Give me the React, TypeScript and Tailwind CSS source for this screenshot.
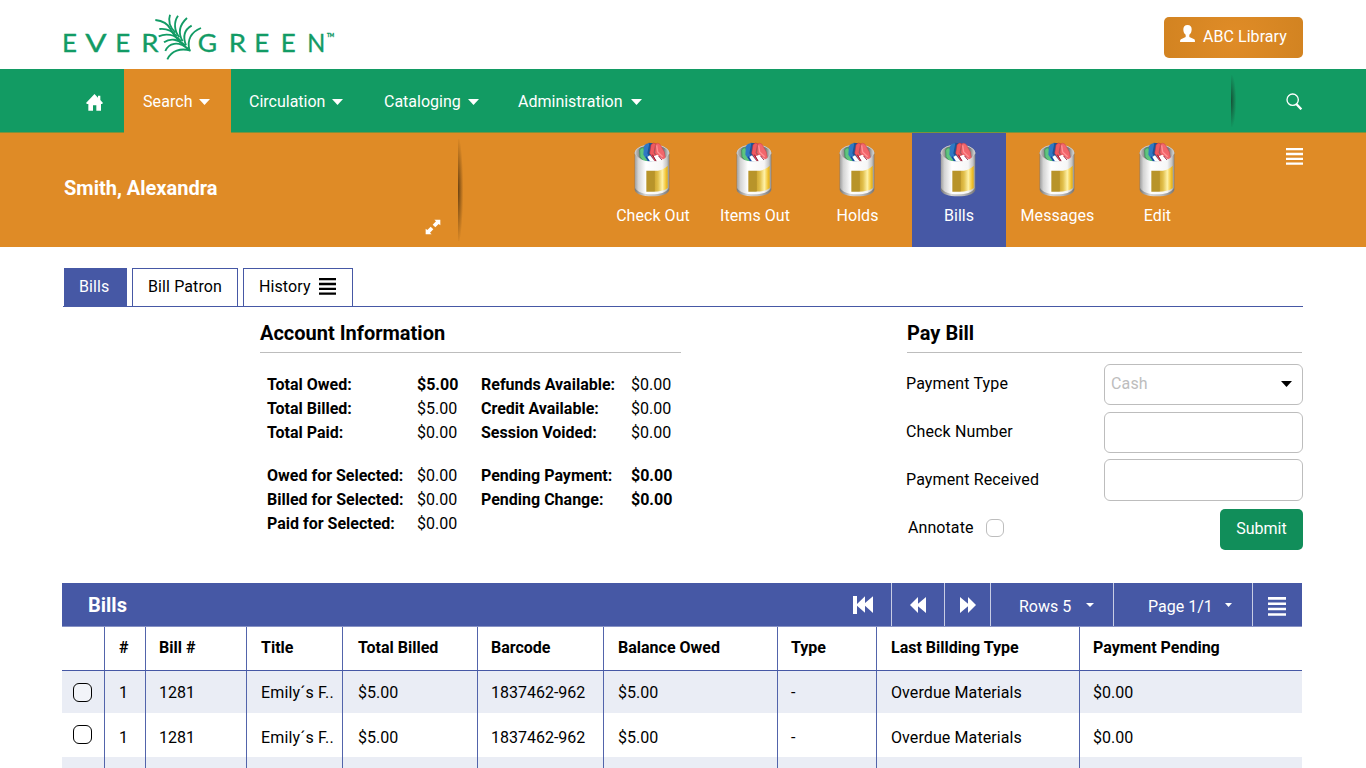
import React from "react";

const LOGO_LETTERS: [string, number, number][] = [
  ["E", 40, 39], ["V", 110, 58], ["E", 200, 39], ["R", 278, 46],
  ["G", 447, 52], ["R", 540, 46], ["E", 617, 39], ["E", 696, 39], ["N", 776, 48],
];

const FRONDS = [
  "M316 60C340 62 354 72 362 88C374 112 396 134 420 152",
  "M360 44C354 62 360 82 376 98",
  "M384 47C371 66 372 92 388 112",
  "M411 54C387 76 384 100 398 124",
  "M425 77C402 90 397 108 408 136",
  "M453 84C424 96 411 118 418 150",
  "M328 87C352 84 366 92 380 108",
  "M326 109C348 99 374 103 394 124",
  "M342 127C360 114 384 116 406 137",
  "M346 153C356 129 384 122 414 146",
  "M352 178C364 152 392 143 422 152",
];

function Logo() {
  return (
    <svg className="ml-[50px] h-[69px] w-[300px] shrink-0" viewBox="0 0 900 207">
      <g fill="none" stroke="#129b65" strokeWidth="5.5">
        {FRONDS.map((d) => <path key={d} d={d} />)}
      </g>
      <g fill="#129b65" stroke="#129b65" strokeWidth="1" fontFamily="Lato, sans-serif" fontSize="75">
        {LOGO_LETTERS.map(([c, x, w], i) => (
          <text key={i} x={x - 4} y="155" textLength={w + 6} lengthAdjust="spacingAndGlyphs">{c}</text>
        ))}
        <text x="831" y="110" fontSize="14" textLength="21">TM</text>
      </g>
    </svg>
  );
}

function Caret({ className }: { className: string }) {
  return <svg className={className} viewBox="0 0 12 6" preserveAspectRatio="none"><path d="M0 0H12L6 6Z" fill="currentColor" /></svg>;
}

function Bars({ className }: { className: string }) {
  return (
    <svg className={className} viewBox="0 0 16 17" preserveAspectRatio="none">
      <path d="M0 1.2H16M0 6H16M0 10.8H16M0 15.6H16" stroke="currentColor" strokeWidth="2.3" />
    </svg>
  );
}

function Jar() {
  return (
    <svg className="mr-[2px] h-[55px] w-[36px]" viewBox="0 0 108 165">
      <defs>
        <linearGradient id="glass"><stop offset="0" stopColor="#a0a0a0" /><stop offset=".1" stopColor="#d4d4d4" /><stop offset=".32" stopColor="#fff" /><stop offset=".8" stopColor="#f6f6f6" /><stop offset=".94" stopColor="#c4c4c4" /><stop offset="1" stopColor="#8e8e8e" /></linearGradient>
        <linearGradient id="base"><stop offset="0" stopColor="#777" /><stop offset=".3" stopColor="#d5d5d5" /><stop offset=".65" stopColor="#bbb" /><stop offset="1" stopColor="#777" /></linearGradient>
        <linearGradient id="rim"><stop offset="0" stopColor="#c8c8c8" /><stop offset=".15" stopColor="#858585" /><stop offset=".85" stopColor="#7d7d7d" /><stop offset="1" stopColor="#ddd" /></linearGradient>
        <linearGradient id="gold"><stop offset="0" stopColor="#b8942a" /><stop offset=".38" stopColor="#b8942a" /><stop offset=".4" stopColor="#d2aa35" /><stop offset=".55" stopColor="#e2c04c" /><stop offset=".75" stopColor="#fff2a8" /><stop offset=".9" stopColor="#f3c83f" /><stop offset="1" stopColor="#e2ab0c" /></linearGradient>
      </defs>
      <path d="M2 30V144C6 157 26 163 54 163S102 157 106 144V30Z" fill="url(#base)" />
      <ellipse cx="54" cy="33" rx="51" ry="25" fill="url(#rim)" stroke="#ccc" strokeWidth="3" />
      <path d="M17 24Q20 16 29 17L42 58H28L18 44Z" fill="#5fc47f" stroke="#2d8a4c" strokeWidth="2" />
      <path d="M44 2L58 4 53 30 63 55 48 60 32 40Z" fill="#1b5596" />
      <path d="M30 12Q36 2 46 4L40 34 54 58H42L28 38Z" fill="#2f78c4" />
      <path d="M51 8Q58 0 65 5L60 32 74 54 62 57 47 34Z" fill="#ef5a60" stroke="#b92f3c" strokeWidth="1.500" />
      <path d="M66 5Q71 1 78 7L91 30 94 48 88 55 74 50 63 32Z" fill="#f2666b" stroke="#d34047" strokeWidth="1.500" />
      <path d="M68 10L71 30 86 44" fill="none" stroke="#ff9295" strokeWidth="4" />
      <path d="M40 45L48 40 62 58H48Z" fill="#fff" />
      <path d="M59 43L70 38 92 56 84 60H68Z" fill="#fff" />
      <path d="M55 38L68 60M74 42L86 56" stroke="#8d1836" strokeWidth="3" />
      <path d="M36 44L46 60" stroke="#164a9d" strokeWidth="4" />
      <path d="M3 35C9 50 28 58 54 58S98 50 105 35V138C96 152 78 157 54 157S11 151 3 138Z" fill="url(#glass)" />
      <path d="M37 86H72C85 83 94 78 101 71V138C92 146 77 149 58 149H37Z" fill="url(#gold)" />
    </svg>
  );
}

const NAV = [
  { label: "Circulation", cls: "ml-[18px] w-[135px]", caret: "ml-[7px]" },
  { label: "Cataloging", cls: "w-[134px]", caret: "ml-[7px]" },
  { label: "Administration", cls: "", caret: "ml-[8px]" },
];

const ACTIONS = [
  { label: "Check Out", cls: "w-[102px]" },
  { label: "Items Out", cls: "w-[102px]" },
  { label: "Holds", cls: "w-[103px]" },
  { label: "Bills", cls: "ml-[3px] w-[94px] bg-[#4658a5]" },
  { label: "Messages", cls: "w-[103px]" },
  { label: "Edit", cls: "w-[97px]" },
];

const COLS = [
  { head: "#", val: "1", cls: "pl-[14px]" },
  { head: "Bill #", val: "1281", cls: "pl-[13px]" },
  { head: "Title", val: "Emily´s F..", cls: "pl-[14px] tracking-[0.15px]" },
  { head: "Total Billed", val: "$5.00", cls: "pl-[15px]" },
  { head: "Barcode", val: "1837462-962", cls: "pl-[13px]" },
  { head: "Balance Owed", val: "$5.00", cls: "pl-[14px]" },
  { head: "Type", val: "-", cls: "pl-[13px]" },
  { head: "Last Billding Type", val: "Overdue Materials", cls: "pl-[14px] tracking-[0.1px]" },
  { head: "Payment Pending", val: "$0.00", cls: "pl-[13px] border-r-0" },
];
const GRID = "grid grid-cols-[43px_41px_101px_96px_135px_126px_174px_99px_203px_222px]";
const CELL = "flex items-center border-r border-[#5264ab] whitespace-nowrap ";

function Row({ cls, box, text }: { cls: string; box: string; text: string }) {
  return (
    <div className={`${GRID} ${cls}`}>
      <div className={`${CELL} pl-[11px]`}><span className={`size-[19px] rounded-[6px] border border-black bg-white/40 ${box}`} /></div>
      {COLS.map((c) => <div key={c.head} className={`${CELL} ${text} ${c.cls}`}>{c.val}</div>)}
    </div>
  );
}

function Figures({ rows, cls }: { rows: [string, string, boolean?][]; cls: string }) {
  return (
    <dl className={`grid leading-6 ${cls}`}>
      {rows.map(([k, v, b]) => (
        <React.Fragment key={k}>
          <dt className="font-bold whitespace-nowrap">{k}</dt>
          <dd className={b ? "font-bold" : ""}>{v}</dd>
        </React.Fragment>
      ))}
    </dl>
  );
}

const FIELD = "w-[199px] rounded-[6px] border border-[#bdbdbd] flex items-center justify-between pl-[6px] pr-[10px] pb-[2px] text-[#bdbdbd]";

export default function App() {
  return (
    <div className="flex h-[768px] w-[1366px] flex-col overflow-hidden bg-white font-['Roboto',sans-serif] text-[16px] text-black">
      <header className="flex h-[69px] shrink-0 items-start justify-between">
        <Logo />
        <button className="mt-[17px] mr-[63px] flex h-[41px] w-[139px] items-center rounded-[5px] bg-[radial-gradient(circle,#e08c27_0%,#d28321_100%)] pb-[2px] pl-[16px] text-white">
          <svg className="mr-[8px] mb-[6px] h-[17px] w-[15px]" viewBox="0 0 45 51"><path d="M22.500 0C31 0 35 5 35 13S32 27 28 29V36L43 43Q45 44 45 51H0Q0 44 3 43L17 36V29C12 26 10 20 10 13S14 0 22.500 0Z" fill="white" /></svg>
          <span className="tracking-[0.05px]">ABC Library</span>
        </button>
      </header>

      <nav className="flex h-[64px] shrink-0 items-stretch border-b border-[#7b923b] bg-[#129b63] text-white">
        <div className="flex w-[124px] items-center pt-[4px] pl-[86px]">
          <svg className="h-[17px] w-[17px]" viewBox="0 0 51 51"><path d="M25.500 0L36 11V5H43V18L51 27 48 30H45V50H31V34H21V50H7V30H3L0 27Z" fill="white" /></svg>
        </div>
        <div className="-mb-px flex w-[107px] items-center bg-[#df8b26] pt-px pl-[19px] tracking-[0.1px]">Search<Caret className="ml-[6px] h-[6px] w-[11px]" /></div>
        {NAV.map((n) => (
          <div key={n.label} className={`flex items-center pt-[2px] ${n.cls}`}>{n.label}<Caret className={`h-[6px] w-[11px] ${n.caret}`} /></div>
        ))}
        <div className="mt-[6px] mr-[50px] ml-auto h-[52px] w-[5px] bg-[radial-gradient(ellipse_at_left,#174f36_0%,transparent_75%)]" />
        <svg className="mt-[24px] mr-[63px] h-[17px] w-[17px]" viewBox="0 0 51 51" fill="none" stroke="white"><circle cx="20" cy="20" r="17" strokeWidth="4" /><path d="M31 33L46 49" strokeWidth="7" /></svg>
      </nav>

      <section className="flex h-[114px] shrink-0 bg-[#df8b26] text-white">
        <div className="flex w-[458px] flex-col">
          <h1 className="mt-[40px] ml-[64px] text-[20px] leading-[30px] font-bold">Smith, Alexandra</h1>
          <svg className="mt-[16px] ml-[425px] h-[16px] w-[16px]" viewBox="0 0 48 48" fill="white"><path d="M28 2H46V19L41 15 31 25 23 17 33 7ZM2 29L7 33 17 23 25 31 15 41 20 46H2Z" /></svg>
        </div>
        <div className="mt-[6px] h-[102px] w-[5px] bg-[radial-gradient(ellipse_at_left,#674012_0%,transparent_75%)]" />
        <div className="ml-[139px] flex">
          {ACTIONS.map((a) => (
            <div key={a.label} className={`flex flex-col items-center pt-[9px] ${a.cls}`}>
              <Jar /><span className="mt-[7px] leading-6 tracking-[0.05px]">{a.label}</span>
            </div>
          ))}
        </div>
        <Bars className="mt-[15px] mr-[63px] ml-auto h-[17px] w-[17px]" />
      </section>

      <div className="mx-[63px] mt-[21px] flex h-[39px] shrink-0 items-stretch gap-[5px] border-b border-[#4658a5] pl-px">
        <div className="flex w-[63px] items-center bg-[#4658a5] pb-px pl-[15px] text-white tracking-[0.1px]">Bills</div>
        <div className="flex w-[106px] items-center justify-center border border-b-0 border-[#4658a5] pb-px tracking-[0.1px]">Bill Patron</div>
        <div className="flex w-[110px] items-center border border-b-0 border-[#4658a5] pb-px pl-[15px] tracking-[0.1px]">History<Bars className="mb-[2px] ml-[8px] h-[17px] w-[17px]" /></div>
      </div>

      <main className="flex h-[276px] shrink-0">
        <section className="ml-[260px] w-[421px]">
          <h2 className="mt-[11px] h-[35px] border-b border-[#bdbdbd] text-[20px] leading-[30px] font-bold">Account Information</h2>
          <div className="mt-[20px] flex pl-[7px]">
            <div className="w-[214px]">
              <Figures cls="grid-cols-[150px_64px]" rows={[["Total Owed:", "$5.00", true], ["Total Billed:", "$5.00"], ["Total Paid:", "$0.00"]]} />
              <Figures cls="mt-[19px] grid-cols-[150px_64px]" rows={[["Owed for Selected:", "$0.00"], ["Billed for Selected:", "$0.00"], ["Paid for Selected:", "$0.00"]]} />
            </div>
            <div>
              <Figures cls="grid-cols-[150px_50px]" rows={[["Refunds Available:", "$0.00"], ["Credit Available:", "$0.00"], ["Session Voided:", "$0.00"]]} />
              <Figures cls="mt-[19px] grid-cols-[150px_50px]" rows={[["Pending Payment:", "$0.00", true], ["Pending Change:", "$0.00", true]]} />
            </div>
          </div>
        </section>
        <section className="ml-[225px] w-[397px]">
          <h2 className="mt-[11px] mr-px ml-px h-[35px] border-b border-[#bdbdbd] text-[20px] leading-[30px] font-bold">Pay Bill</h2>
          <div className="mt-[11px] flex flex-col gap-[6px] tracking-[0.13px]">
            <div className="flex h-[42px] justify-between"><span className="leading-[39px]">Payment Type</span><div className={`h-[41px] ${FIELD}`}>Cash<Caret className="h-[6px] w-[11px] text-black" /></div></div>
            <div className="flex h-[42px] justify-between"><span className="leading-[39px]">Check Number</span><div className={`h-[41px] ${FIELD}`} /></div>
            <div className="flex h-[42px] justify-between"><span className="leading-[39px]">Payment Received</span><div className={`-mt-px h-[42px] ${FIELD}`} /></div>
            <div className="mt-px flex h-[41px] items-start">
              <span className="ml-[2px] w-[78px] leading-[37px] tracking-[0.08px]">Annotate</span>
              <span className="mt-[10px] size-[18px] rounded-[6px] border border-[#bdbdbd]" />
              <button className="ml-auto h-[41px] w-[83px] rounded-[5px] bg-[#118e5a] pb-[2px] tracking-normal text-white">Submit</button>
            </div>
          </div>
        </section>
      </main>

      <section className="ml-[62px] w-[1240px] shrink-0">
        <div className="flex h-[44px] items-stretch border-b border-[#8792c4] bg-[#4658a5] text-white">
          <h2 className="w-[774px] pl-[26px] text-[20px] leading-[44px] font-bold">Bills</h2>
          <div className="flex w-[55px] items-center pt-px pl-[17px]"><svg className="h-[18px] w-[20px]" viewBox="0 0 60 54" fill="white"><path d="M0 0H12V24L36 1V21L60 1V51L36 29V50L12 29V54H0Z" /></svg></div>
          <div className="flex w-[53px] items-center border-l border-white/70 pt-px pl-[18px]"><svg className="h-[16px] w-[16px]" viewBox="0 0 48 48" fill="white"><path d="M0 24L24 0V20L48 0V48L24 28V48Z" /></svg></div>
          <div className="flex w-[46px] items-center border-l border-white/70 pt-px pl-[15px]"><svg className="h-[16px] w-[16px]" viewBox="0 0 48 48" fill="white"><path d="M48 24L24 0V20L0 0V48L24 28V48Z" /></svg></div>
          <div className="flex w-[123px] items-center border-l border-white/70 pt-[4px] pl-[28px]">Rows 5<Caret className="mb-[4px] ml-[15px] h-[4px] w-[8px]" /></div>
          <div className="flex w-[139px] items-center border-l border-white/70 pt-[4px] pl-[34px]">Page 1/1<Caret className="mb-[4px] ml-[12px] h-[4px] w-[7px]" /></div>
          <div className="flex w-[50px] items-center border-l border-white/70 pt-[3px] pl-[15px]"><Bars className="h-[19px] w-[18px]" /></div>
        </div>
        <div className={`${GRID} h-[44px] border-b border-[#4658a5] font-bold`}>
          <div className={CELL} />
          {COLS.map((c) => <div key={c.head} className={`${CELL} pb-[2px] ${c.cls} tracking-normal`}>{c.head}</div>)}
        </div>
        <Row cls="h-[42px] bg-[#eaedf5]" box="" text="pt-[2px]" />
        <Row cls="h-[44px]" box="mb-px" text="pt-[5px]" />
        <div className={`${GRID} h-[44px] bg-[#eaedf5]`}>
          <div className={CELL} />
          {COLS.map((c) => <div key={c.head} className={`${CELL} ${c.cls}`} />)}
        </div>
      </section>
    </div>
  );
}
